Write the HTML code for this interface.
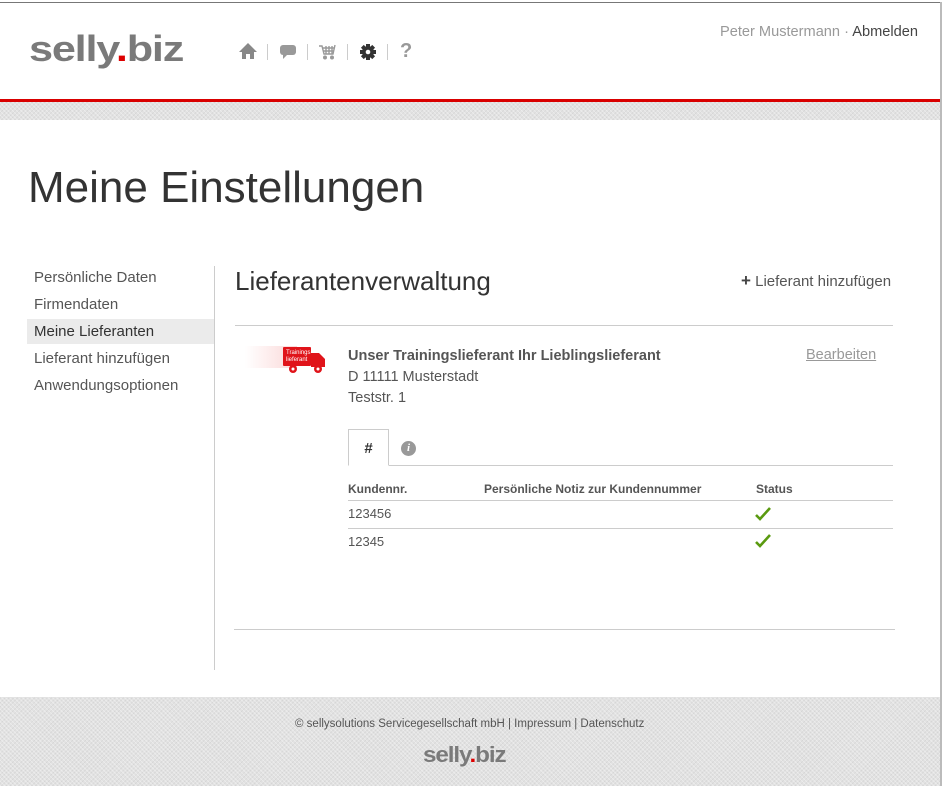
<!DOCTYPE html>
<html><head><meta charset="utf-8"><style>
*{margin:0;padding:0;box-sizing:border-box}
body{width:942px;height:786px;position:relative;background:#fff;font-family:"Liberation Sans",sans-serif;color:#444;overflow:hidden}
.a{position:absolute;white-space:nowrap}
.tex{background-color:#e2e2e2;background-image:repeating-linear-gradient(45deg,rgba(255,255,255,.35) 0 1px,transparent 1px 3px),repeating-linear-gradient(-45deg,rgba(0,0,0,.05) 0 1px,transparent 1px 3px)}
.logo{font-weight:bold;color:#7a7a7a;transform-origin:left top;letter-spacing:-1px}
.logo i{font-style:normal;color:#d00}
.sep{position:absolute;top:44px;width:1px;height:16px;background:#ccc}
.nav div{position:absolute;left:27px;width:187px;height:25px;padding-left:7px;line-height:25px;font-size:15px;color:#555}
.hl{position:absolute;height:1px;background:#ccc}
.th{font-size:12px;font-weight:bold;color:#555}
.td{font-size:13px;color:#555}
</style></head><body>
<div class="a" style="left:0;top:2px;width:942px;height:1px;background:#777"></div>
<div class="a" style="left:940px;top:2px;width:2px;height:784px;background:#bbb"></div>
<div class="a logo" style="left:29px;top:28px;font-size:36px;transform:scaleX(1.2)">selly<i>.</i>biz</div>
<svg class="a" style="left:238px;top:42px" width="20" height="18" viewBox="0 0 20 18"><path d="M10 1 L1 10 H4 V17 H8 V12 H12 V17 H16 V10 H19 Z" fill="#888"/></svg>
<div class="sep" style="left:267px"></div>
<svg class="a" style="left:279px;top:44px" width="18" height="16" viewBox="0 0 18 16"><rect x="1" y="1" width="16" height="10" rx="3" fill="#999"/><path d="M4 10 L4 15 L9 10 Z" fill="#999"/></svg>
<div class="sep" style="left:307px"></div>
<svg class="a" style="left:318px;top:43px" width="19" height="17" viewBox="0 0 19 17" fill="none" stroke="#999" stroke-width="1.4"><path d="M1 3 H4 L6 11 H15 L17 2"/><path d="M5 5 H16 M5.5 8 H15.5 M8 3 V11 M11 3 V11 M14 3 V11"/><circle cx="7" cy="14.5" r="1.3" fill="#999"/><circle cx="14" cy="14.5" r="1.3" fill="#999"/></svg>
<div class="sep" style="left:347px"></div>
<svg class="a" style="left:359px;top:43px" width="18" height="18" viewBox="0 0 18 18"><g fill="#333"><circle cx="9" cy="9" r="6"/><rect x="7" y="1" width="4" height="16"/><rect x="1" y="7" width="16" height="4"/><rect x="7" y="1" width="4" height="16" transform="rotate(45 9 9)"/><rect x="7" y="1" width="4" height="16" transform="rotate(-45 9 9)"/></g><circle cx="9" cy="9" r="2.3" fill="#fff"/></svg>
<div class="sep" style="left:387px"></div>
<div class="a" style="left:400px;top:40px;font-size:20px;font-weight:bold;color:#999">?</div>
<div class="a" style="left:720px;top:24px;font-size:14.6px;color:#999">Peter Mustermann · <span style="color:#444">Abmelden</span></div>
<div class="a" style="left:0;top:99px;width:940px;height:3px;background:#d90000"></div>
<div class="a tex" style="left:0;top:102px;width:940px;height:18px"></div>
<div class="a" style="left:28px;top:163px;font-size:44px;font-weight:300;color:#333">Meine Einstellungen</div>
<div class="nav">
<div style="top:265px">Persönliche Daten</div>
<div style="top:292px">Firmendaten</div>
<div style="top:319px;background:#ebebeb;color:#333">Meine Lieferanten</div>
<div style="top:346px">Lieferant hinzufügen</div>
<div style="top:373px">Anwendungsoptionen</div>
</div>
<div class="a" style="left:214px;top:266px;width:1px;height:404px;background:#ccc"></div>
<div class="a" style="left:235px;top:266px;font-size:26px;color:#333">Lieferantenverwaltung</div>
<div class="a" style="left:741px;top:271px;font-size:15px;color:#555"><b style="font-size:17px;color:#444">+</b> Lieferant hinzufügen</div>
<div class="hl" style="left:235px;top:325px;width:658px"></div>
<div class="a" style="left:245px;top:346px;width:52px;height:22px;background:linear-gradient(90deg,#fff,#fbd8d8)"></div>
<svg class="a" style="left:282px;top:345px" width="45" height="30" viewBox="0 0 45 30"><rect x="1" y="2" width="28" height="19" rx="1" fill="#e0141a"/><path d="M29 8 H37 L43 14 V22 H29 Z" fill="#e0141a"/><circle cx="11" cy="24" r="4" fill="#e0141a"/><circle cx="11" cy="24" r="1.5" fill="#fff"/><circle cx="36" cy="24" r="4" fill="#e0141a"/><circle cx="36" cy="24" r="1.5" fill="#fff"/><text x="4" y="9" font-size="6" fill="#fff" font-family="Liberation Sans">Trainings</text><text x="4" y="16" font-size="6" fill="#fff" font-family="Liberation Sans">lieferant</text></svg>
<div class="a" style="left:348px;top:348px;font-size:14.5px;font-weight:bold;color:#555">Unser Trainingslieferant Ihr Lieblingslieferant</div>
<div class="a" style="left:348px;top:369px;font-size:14.5px;color:#555">D 11111 Musterstadt</div>
<div class="a" style="left:348px;top:390px;font-size:14.5px;color:#555">Teststr. 1</div>
<div class="a" style="left:806px;top:347px;font-size:14.5px;color:#999;text-decoration:underline">Bearbeiten</div>
<div class="hl" style="left:389px;top:465px;width:504px"></div>
<div class="a" style="left:348px;top:429px;width:41px;height:37px;border:1px solid #ccc;border-bottom:1px solid #fff;background:#fff;text-align:center;line-height:38px;font-size:15px;font-weight:bold;color:#333">#</div>
<div class="a" style="left:401px;top:441px;width:15px;height:15px;border-radius:50%;background:#999;color:#fff;font-size:11px;font-weight:bold;font-style:italic;text-align:center;line-height:15px;font-family:'Liberation Serif',serif">i</div>
<div class="a th" style="left:348px;top:482px">Kundennr.</div>
<div class="a th" style="left:484px;top:482px">Persönliche Notiz zur Kundennummer</div>
<div class="a th" style="left:756px;top:482px">Status</div>
<div class="hl" style="left:348px;top:500px;width:545px"></div>
<div class="a td" style="left:348px;top:506px">123456</div>
<svg class="a" style="left:755px;top:507px" width="16" height="14" viewBox="0 0 16 14"><path d="M1 8 L5 12 L15 1" fill="none" stroke="#5a9a10" stroke-width="2.6"/></svg>
<div class="hl" style="left:348px;top:528px;width:545px"></div>
<div class="a td" style="left:348px;top:534px">12345</div>
<svg class="a" style="left:755px;top:534px" width="16" height="14" viewBox="0 0 16 14"><path d="M1 8 L5 12 L15 1" fill="none" stroke="#5a9a10" stroke-width="2.6"/></svg>
<div class="hl" style="left:234px;top:629px;width:661px"></div>
<div class="a tex" style="left:0;top:697px;width:940px;height:89px"></div>
<div class="a" style="left:295px;top:718px;font-size:11.5px;color:#555">© sellysolutions Servicegesellschaft mbH | Impressum | Datenschutz</div>
<div class="a logo" style="left:423px;top:742px;font-size:22px;transform:scaleX(1.1)">selly<i>.</i>biz</div>
</body></html>
